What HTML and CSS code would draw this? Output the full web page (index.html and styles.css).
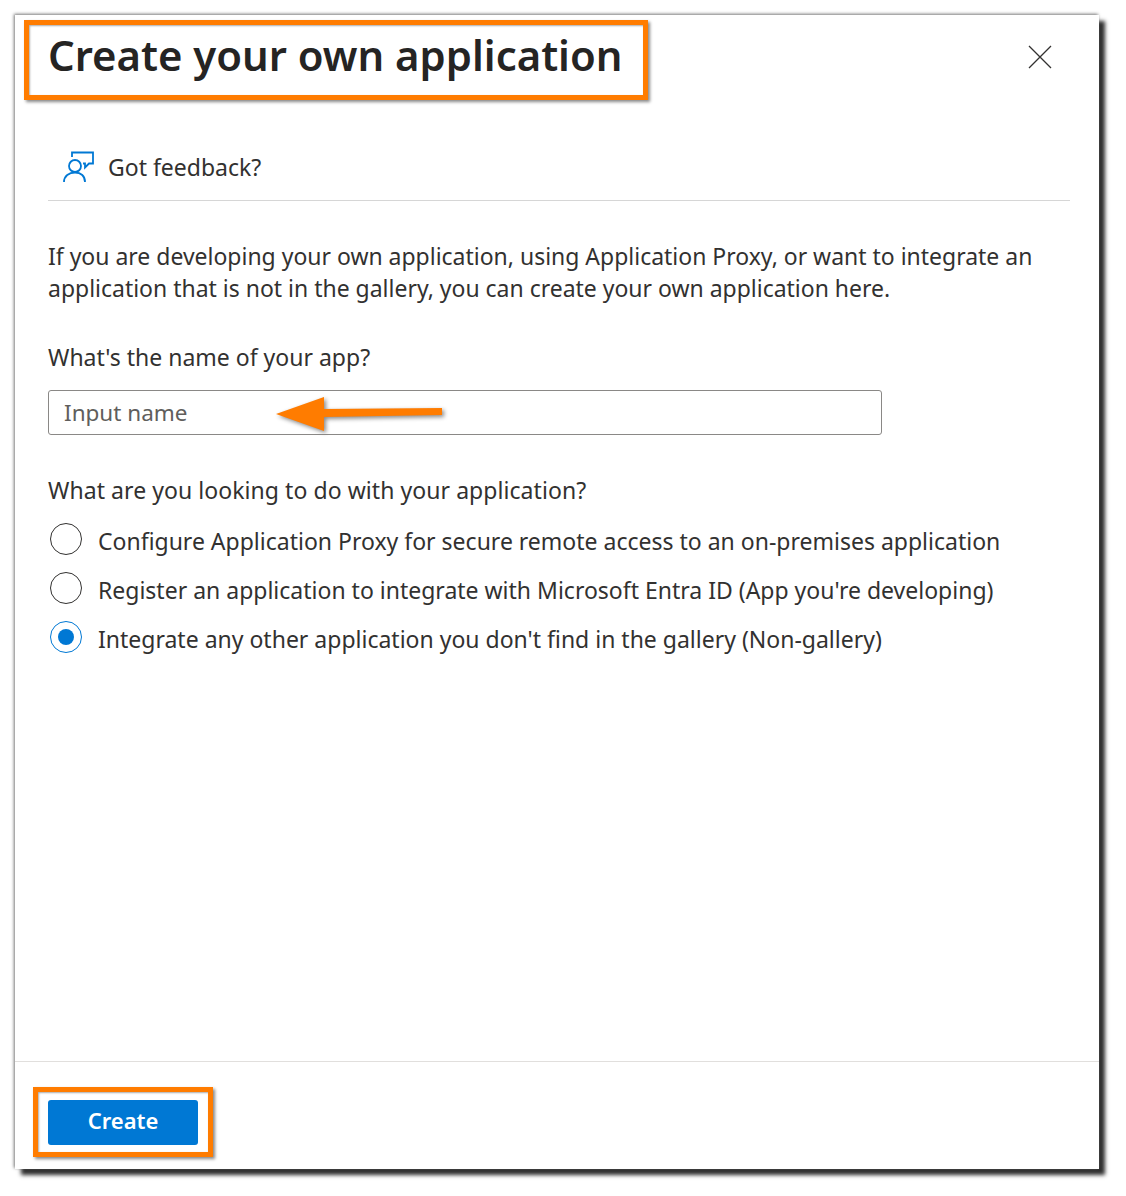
FILE: index.html
```html
<!DOCTYPE html>
<html>

<head>
    <meta charset="utf-8">
    <title>Create your own application</title>
    <link rel="stylesheet" href="styles.css">
</head>

<body>
    <div class="panel">
        <div class="panel-body">
            <div class="header">
                <h1>Create your own application</h1>
                <svg class="close" width="24" height="24" viewBox="0 0 24 24">
                    <path d="M1 1L23 23M23 1L1 23" stroke="#323130" stroke-width="1.3" fill="none" />
                </svg>
            </div>

            <div class="toolbar">
                <svg class="feedback-icon" width="32" height="32" viewBox="0 0 32 32" fill="none" stroke="#0078d4" stroke-width="1.8">
                    <path d="M9 6V1.5H30V12.5H26L22 16.5V12.5H20" />
                    <circle cx="12" cy="15" r="6" />
                    <path d="M1 31C1 25 6 21.5 12 21.5C18 21.5 22 25 22 31" />
                </svg>
                <span>Got feedback?</span>
            </div>

            <p class="intro">If you are developing your own application, using Application Proxy, or want to integrate an application that is not in the gallery, you can create your own application here.</p>

            <label class="field-label" for="appName">What's the name of your app?</label>
            <input class="name-input" type="text" id="appName" placeholder="Input name">

            <div class="field-label question">What are you looking to do with your application?</div>
            <div class="radio-list">
                <div class="radio-row"><span class="radio"></span><span>Configure Application Proxy for secure remote access to an on-premises application</span></div>
                <div class="radio-row"><span class="radio"></span><span>Register an application to integrate with Microsoft Entra ID (App you're developing)</span></div>
                <div class="radio-row"><span class="radio checked"></span><span>Integrate any other application you don't find in the gallery (Non-gallery)</span></div>
            </div>
        </div>

        <div class="footer">
            <button class="create-btn" type="button">Create</button>
        </div>
    </div>

    <!-- screenshot annotations -->
    <div class="callout callout-title"></div>
    <div class="callout callout-create"></div>
    <svg class="arrow" width="176" height="44" viewBox="0 0 176 44">
        <path d="M2 20L50 3L50 15L168 14L168 21L50 23L50 37Z" fill="#ff7c00" />
    </svg>
</body>

</html>
```

FILE: styles.css
```css
html,
body {
    margin: 0;
    padding: 0;
    background: #fff;
}

body {
    height: 1196px;
    position: relative;
    overflow: hidden;
    font-family: "Noto Sans", "Open Sans", sans-serif;
    font-size: 23px;
    color: #323130;
}

.panel {
    width: 1084px;
    height: 1154px;
    margin: 15px 0 0 15px;
    background: #fff;
    display: flex;
    flex-direction: column;
    box-shadow: -1px -1px 3px #777, 6px 6px 4px #2e2e2e;
}

.panel-body {
    flex: 1;
    padding: 0 29px 0 33px;
}

.header {
    height: 86px;
    display: flex;
    align-items: center;
    justify-content: space-between;
    padding-right: 18px;
}

h1 {
    margin: -7px 0 0;
    font-size: 41.85px;
    font-weight: 600;
    color: #252423;
}

.close {
    margin-top: -2px;
}

.toolbar {
    height: 100px;
    box-sizing: border-box;
    border-bottom: 1px solid #d6d6d6;
    padding: 50px 0 0 15px;
    display: flex;
    align-items: flex-start;
    gap: 13px;
}

.intro {
    margin: 39px 0 0;
    line-height: 32px;
    font-size: 22.98px;
}

.field-label {
    display: block;
    margin-top: 37px;
    line-height: 32px;
}

.name-input {
    display: block;
    width: 834px;
    height: 45px;
    box-sizing: border-box;
    margin-top: 17px;
    padding: 0 15px;
    border: 1px solid #8a8886;
    border-radius: 3px;
    font: inherit;
    font-size: 22.5px;
    color: #323130;
}

.name-input::placeholder {
    color: #605e5c;
    opacity: 1;
}

.question {
    margin-top: 39px;
    letter-spacing: 0.06px;
}

.radio-list {
    margin-top: 10px;
}

.radio-row {
    height: 49px;
    display: flex;
    align-items: center;
    gap: 16px;
    white-space: nowrap;
}

.radio {
    width: 32px;
    height: 32px;
    box-sizing: border-box;
    margin: -3px 0 0 2px;
    border: 1px solid #323130;
    border-radius: 50%;
    flex: none;
    display: flex;
    align-items: center;
    justify-content: center;
}

.radio.checked {
    border-color: #0078d4;
}

.radio.checked::after {
    content: "";
    width: 16px;
    height: 16px;
    border-radius: 50%;
    background: #0078d4;
}

.footer {
    height: 108px;
    box-sizing: border-box;
    border-top: 1px solid #e1dfdd;
    padding: 38px 0 0 33px;
}

.create-btn {
    display: block;
    width: 150px;
    height: 45px;
    padding: 0 0 5px;
    border: none;
    border-radius: 3px;
    background: #0078d4;
    color: #fff;
    font: inherit;
    font-size: 22px;
    font-weight: 600;
}

.callout {
    position: absolute;
    box-sizing: border-box;
    border: 5px solid #ff7c00;
    box-shadow: 2px 2px 3px #888, inset 1px 1px 2px #aaa;
}

.callout-title {
    left: 24px;
    top: 20px;
    width: 624px;
    height: 80px;
}

.callout-create {
    left: 33px;
    top: 1087px;
    width: 180px;
    height: 70px;
}

.arrow {
    position: absolute;
    left: 274px;
    top: 394px;
    filter: drop-shadow(2px 2px 2px #888);
}
```
